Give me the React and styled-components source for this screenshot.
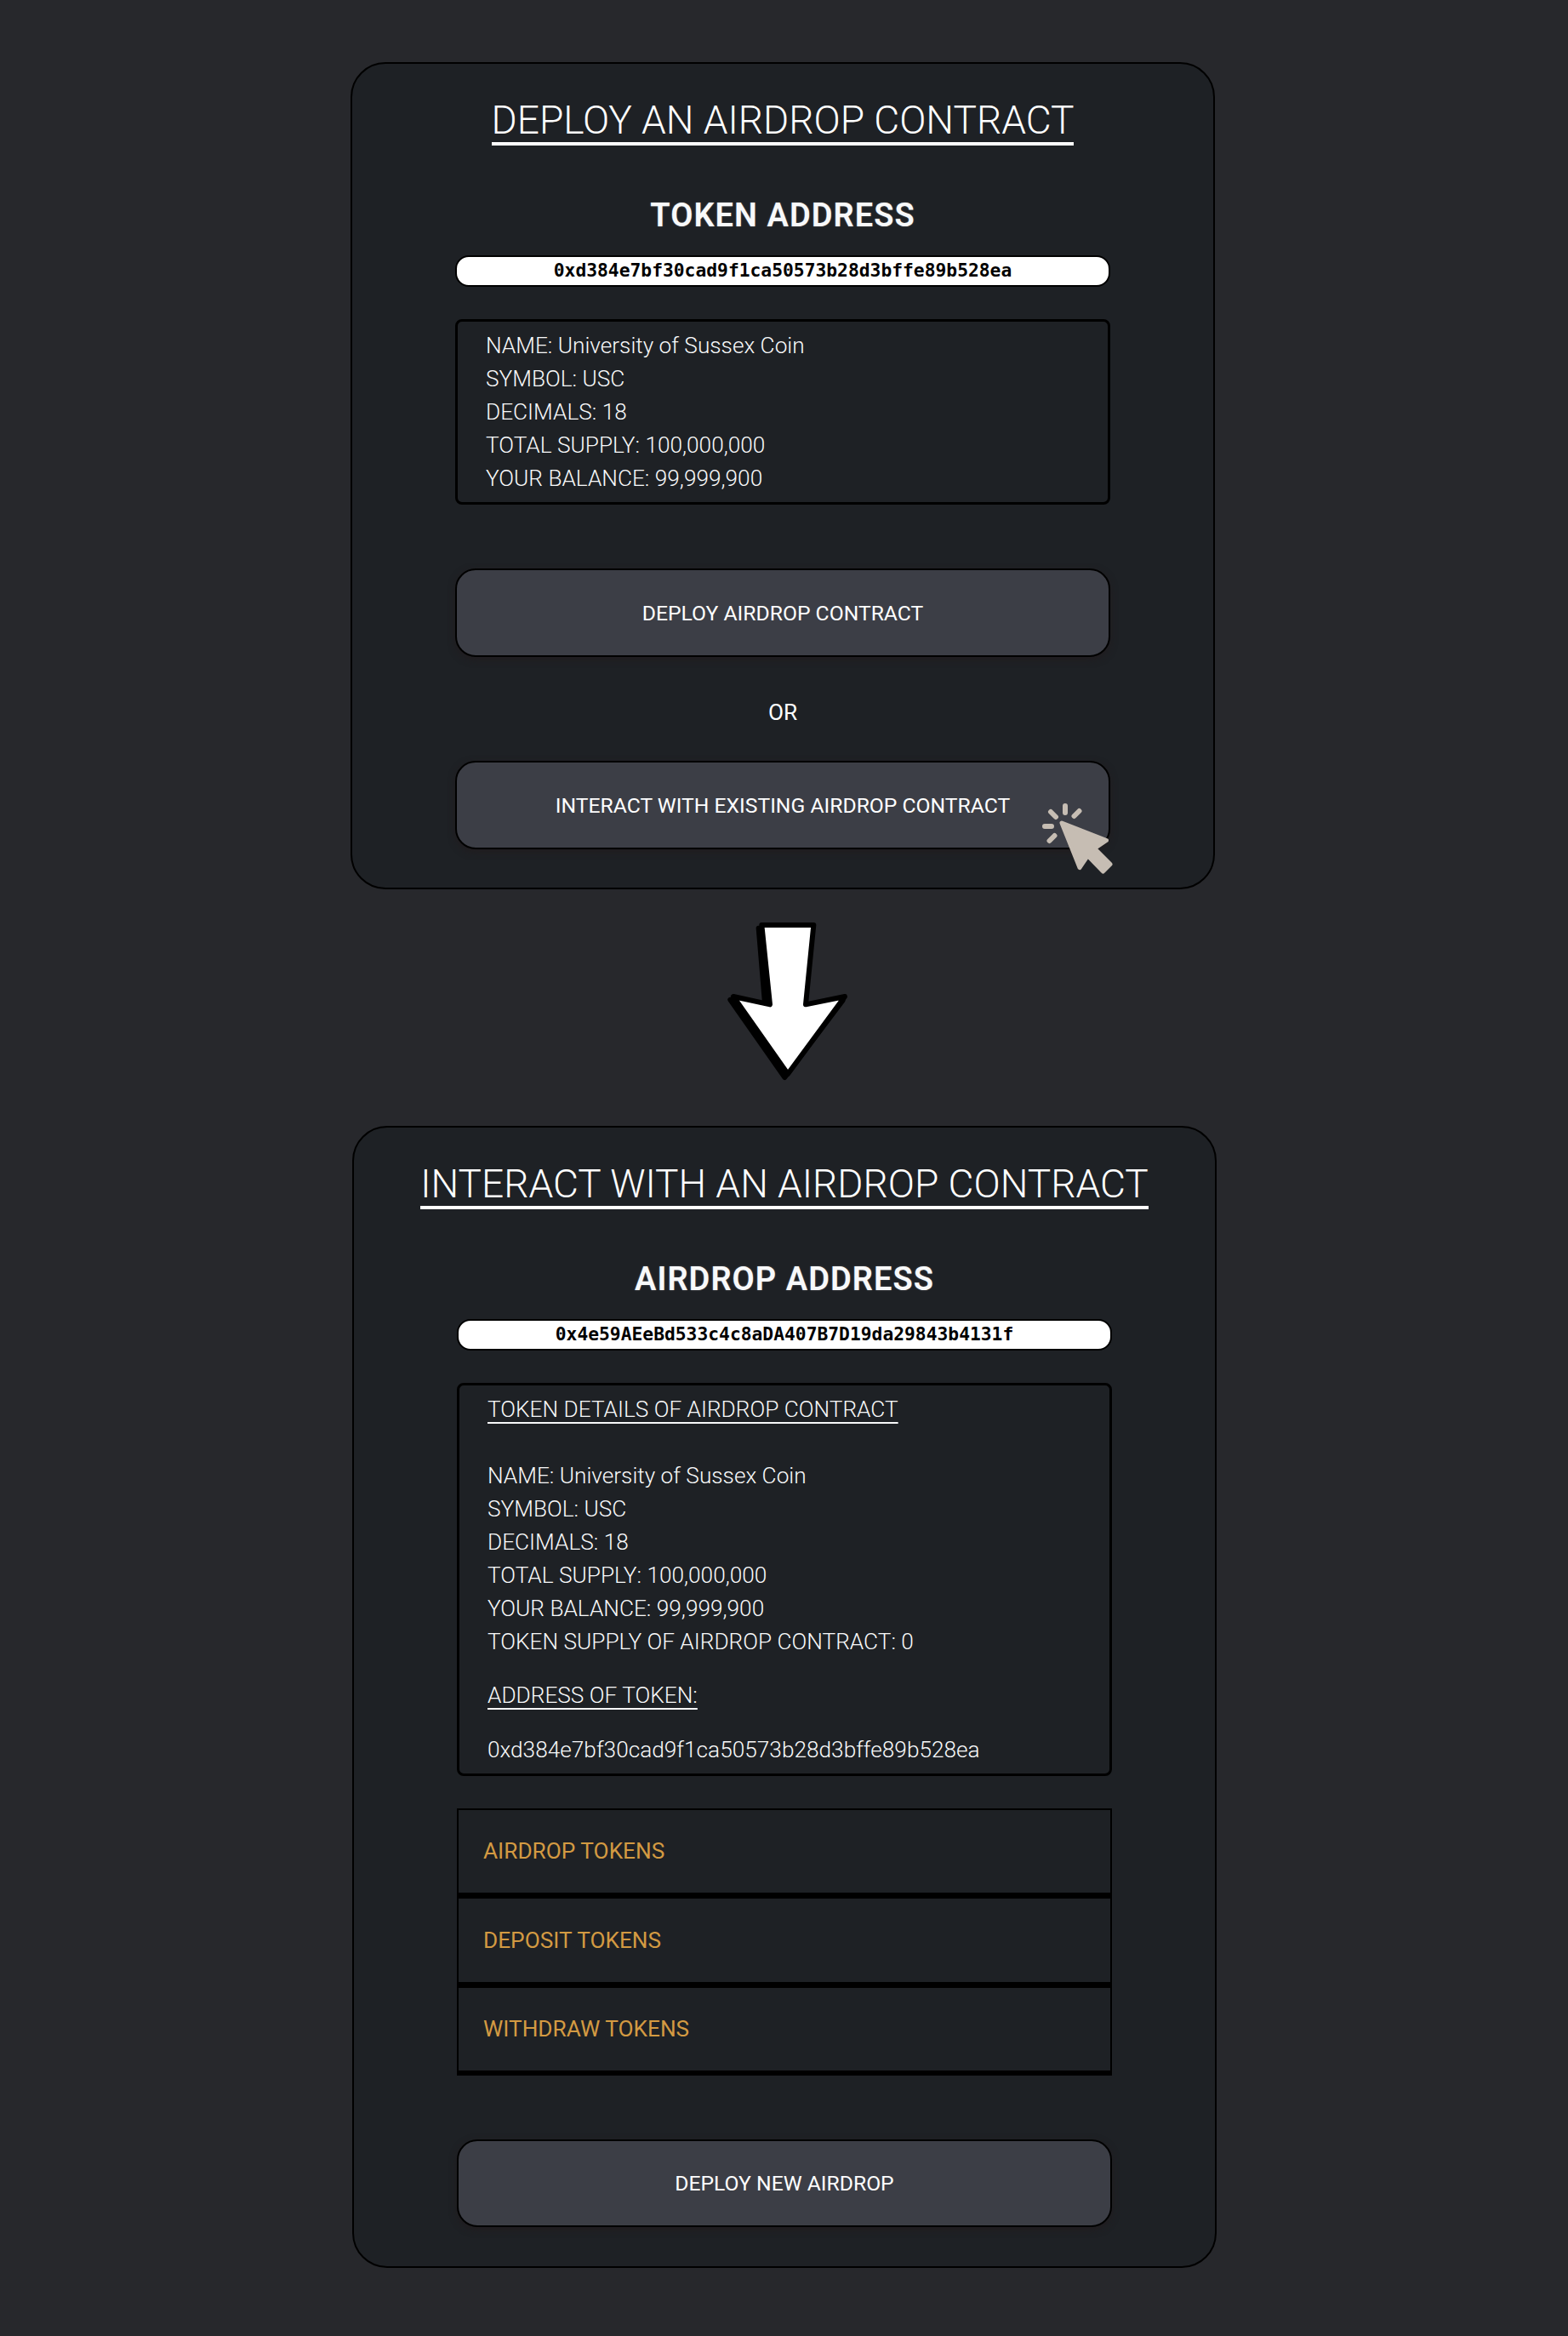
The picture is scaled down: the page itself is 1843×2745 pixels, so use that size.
import React from "react";
import styled, { createGlobalStyle } from "styled-components";

const GlobalStyle = createGlobalStyle`
  * { box-sizing: border-box; }
  body { margin: 0; background: #27282c; font-family: Roboto, sans-serif; color: #fff; }
`;

const Page = styled.main`
  display: flex;
  flex-direction: column;
  align-items: center;
  width: 1843px;
  height: 2745px;
  padding-top: 73px;
`;

const Card = styled.section`
  display: flex;
  flex-direction: column;
  align-items: center;
  width: 1016px;
  height: ${(p) => p.$height}px;
  margin-left: ${(p) => p.$shift}px;
  padding-top: 40px;
  background: #1e2125;
  border: 2px solid #000;
  border-radius: 41px;
`;

const Title = styled.h1`
  margin: 0;
  font-size: 46.05px;
  line-height: 52px;
  font-weight: 300;
  white-space: nowrap;
  border-bottom: 4px solid #fff;
`;

const Label = styled.h2`
  margin: 59px 0 24px;
  font-size: 38px;
  line-height: 46px;
  font-weight: 600;
  letter-spacing: 1.05px;
  color: #f8f9fa;
  text-shadow: 0 0 2px rgba(248, 249, 250, 0.3);
`;

const AddressField = styled.div`
  width: 770px;
  height: 37px;
  display: flex;
  align-items: center;
  justify-content: center;
  padding-bottom: 2px;
  border: 2px solid #000;
  border-radius: 16px;
  background: #fff;
  color: #000;
  font: bold 21.3px "DejaVu Sans Mono", monospace;
`;

const Details = styled.div`
  width: 770px;
  height: ${(p) => p.$height}px;
  margin-top: 38px;
  padding: 9px 33px 0;
  border: 3px solid #000;
  border-radius: 8px;
  font-size: 26.23px;
  line-height: 39px;
  font-weight: 300;
  color: #f8f9fa;
`;

const Line = styled.div`
  height: 39px;
  margin-bottom: ${(p) => p.$gap || 0}px;
  white-space: nowrap;
`;

const Underlined = styled.span`
  text-decoration: underline;
  text-decoration-thickness: 2px;
  text-underline-offset: 6px;
`;

const Button = styled.button`
  width: 770px;
  height: ${(p) => p.$height || 104}px;
  flex-shrink: 0;
  margin-top: ${(p) => p.$top}px;
  padding: 0;
  border: 2px solid #000;
  border-radius: 24px;
  background: #3c3e46;
  color: #fff;
  font: 400 24.7px Roboto, sans-serif;
  box-shadow: 0 3px 8px rgba(33, 28, 30, 0.9);
  position: relative;
`;

const Or = styled.div`
  margin-top: 46px;
  font-size: 26.23px;
  line-height: 39px;
`;

const Accordion = styled.div`
  width: 770px;
  margin-top: 38px;
  border: 2px solid #000;
  border-bottom: 0;
`;

const Item = styled.div`
  display: flex;
  align-items: center;
  height: ${(p) => p.$height}px;
  padding: 0 0 1px 29px;
  border-bottom: 7px solid #000;
  font-size: 26.23px;
  color: #d39a42;

  &:last-child {
    border-bottom-width: 6px;
    padding-bottom: 2px;
  }
`;

const Arrow = styled.svg`
  width: 190px;
  height: 230px;
  margin: 15px 0 33px 7px;
  flex-shrink: 0;
`;

const Cursor = styled.svg`
  position: absolute;
  left: 683px;
  top: 44px;
  width: 90px;
  height: 90px;
`;

const TOKEN = "0xd384e7bf30cad9f1ca50573b28d3bffe89b528ea";
const facts = [
  "NAME: University of Sussex Coin",
  "SYMBOL: USC",
  "DECIMALS: 18",
  "TOTAL SUPPLY: 100,000,000",
  "YOUR BALANCE: 99,999,900",
];

const Facts = () => facts.map((f) => <Line key={f}>{f}</Line>);

export default function App() {
  return (
    <Page>
      <GlobalStyle />
      <Card $height={972} $shift={-3}>
        <Title>DEPLOY AN AIRDROP CONTRACT</Title>
        <Label>TOKEN ADDRESS</Label>
        <AddressField>{TOKEN}</AddressField>
        <Details $height={218}>
          <Facts />
        </Details>
        <Button $top={75}>DEPLOY AIRDROP CONTRACT</Button>
        <Or>OR</Or>
        <Button $top={37}>
          INTERACT WITH EXISTING AIRDROP CONTRACT
          <Cursor viewBox="1220 940 90 90" fill="#c6bdb3" stroke="#c6bdb3" strokeLinejoin="round" strokeLinecap="round">
            <path strokeWidth="5" d="M1248 967L1300.500 987.500L1286.500 997L1305 1015.500L1296.500 1024L1278.500 1005.500L1269 1019.500Z" />
            <path strokeWidth="6" d="M1252 947v8M1235 954l6 6M1268.500 953l-6 6M1228 971h8M1239.500 982l-6 6" />
          </Cursor>
        </Button>
      </Card>

      <Arrow viewBox="0 0 570 690" strokeLinejoin="round" stroke="#000" strokeWidth="18">
        <path fill="#000" d="M185 92L368 92L342 372L482 346L277 618L85 344L208 368Z" />
        <path fill="#fff" d="M196 81L379 81L351 361L489 333L288 606L96 333L225 361Z" />
      </Arrow>

      <Card $height={1342} $shift={1}>
        <Title>INTERACT WITH AN AIRDROP CONTRACT</Title>
        <Label>AIRDROP ADDRESS</Label>
        <AddressField>0x4e59AEeBd533c4c8aDA407B7D19da29843b4131f</AddressField>
        <Details $height={462}>
          <Line $gap={39}>
            <Underlined>TOKEN DETAILS OF AIRDROP CONTRACT</Underlined>
          </Line>
          <Facts />
          <Line $gap={24}>TOKEN SUPPLY OF AIRDROP CONTRACT: 0</Line>
          <Line $gap={25}>
            <Underlined>ADDRESS OF TOKEN:</Underlined>
          </Line>
          <Line>{TOKEN}</Line>
        </Details>
        <Accordion>
          <Item $height={104}>AIRDROP TOKENS</Item>
          <Item $height={105}>DEPOSIT TOKENS</Item>
          <Item $height={103}>WITHDRAW TOKENS</Item>
        </Accordion>
        <Button $top={75} $height={103}>DEPLOY NEW AIRDROP</Button>
      </Card>
    </Page>
  );
}
